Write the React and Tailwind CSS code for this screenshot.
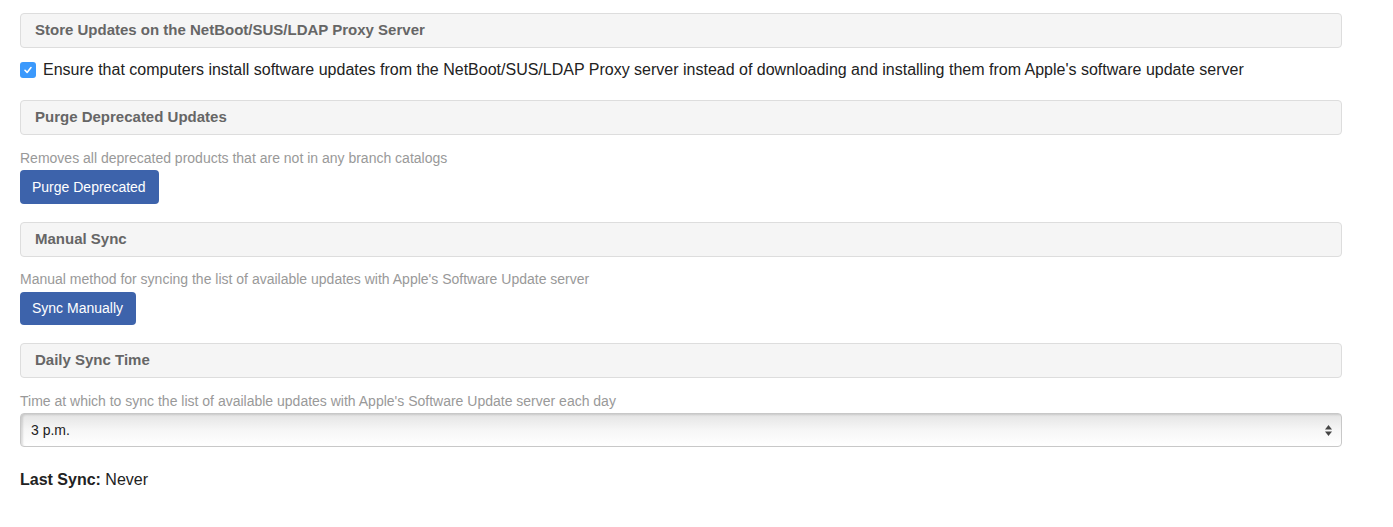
import React from "react";

const Heading = ({ children, className = "" }) => (
  <div
    className={`h-[35px] flex items-center px-[14px] bg-[#f5f5f5] border border-[#dddddd] rounded-[4px] text-[15px] font-bold text-[#666666] ${className}`}
  >
    {children}
  </div>
);

const Help = ({ children, className = "" }) => (
  <p className={`text-[14px] leading-[20px] text-[#999999] ${className}`}>{children}</p>
);

const Button = ({ children, className = "" }) => (
  <button
    className={`pl-[12px] pr-[13px] bg-[#3d63ab] text-white text-[14px] rounded-[4px] ${className}`}
  >
    {children}
  </button>
);

export default function App() {
  return (
    <div
      className="min-h-[527px] bg-white pl-[20px] pr-[51px] pt-[13px] text-[#333333]"
      style={{ fontFamily: '"Liberation Sans", Arial, sans-serif' }}
    >
      {/* Store updates */}
      <Heading>Store Updates on the NetBoot/SUS/LDAP Proxy Server</Heading>
      <label className="mt-[12px] flex items-center gap-[7px] text-[16px] leading-[20px] text-[#222222]">
        <span className="w-[16px] h-[16px] shrink-0 rounded-[3px] bg-[#3b99fc] flex items-center justify-center">
          <svg width="10" height="10" viewBox="0 0 10 10" fill="none">
            <path d="M2 5.3 L4.1 7.4 L8 2.6" stroke="white" strokeWidth="1.6" strokeLinecap="round" strokeLinejoin="round" />
          </svg>
        </span>
        Ensure that computers install software updates from the NetBoot/SUS/LDAP Proxy server instead of downloading and installing them from Apple's software update server
      </label>

      {/* Purge */}
      <Heading className="mt-[20px]">Purge Deprecated Updates</Heading>
      <Help className="mt-[13px]">Removes all deprecated products that are not in any branch catalogs</Help>
      <Button className="mt-[2px] h-[34px]">Purge Deprecated</Button>

      {/* Manual sync */}
      <Heading className="mt-[18px]">Manual Sync</Heading>
      <Help className="mt-[12px]">Manual method for syncing the list of available updates with Apple's Software Update server</Help>
      <Button className="mt-[3px] h-[33px]">Sync Manually</Button>

      {/* Daily sync */}
      <Heading className="mt-[18px]">Daily Sync Time</Heading>
      <Help className="mt-[13px]">Time at which to sync the list of available updates with Apple's Software Update server each day</Help>
      <div className="mt-[2px] h-[34px] flex items-center justify-between pl-[10px] pr-[8px] rounded-[4px] border border-[#c8c8c8] bg-gradient-to-b from-[#e4e4e4] via-[#f6f6f6] to-[#ffffff] shadow-[inset_2px_1px_2px_rgba(0,0,0,0.12)] text-[14px] text-[#222222]">
        <span>3 p.m.</span>
        <svg width="9" height="13" viewBox="0 0 9 13">
          <path d="M4.5 1 L8 5.5 L1 5.5 Z" fill="#444" />
          <path d="M4.5 12 L8 7.5 L1 7.5 Z" fill="#444" />
        </svg>
      </div>

      <p className="mt-[23px] text-[16px] leading-[20px] text-[#222222]">
        <span className="font-bold">Last Sync:</span> Never
      </p>
    </div>
  );
}
